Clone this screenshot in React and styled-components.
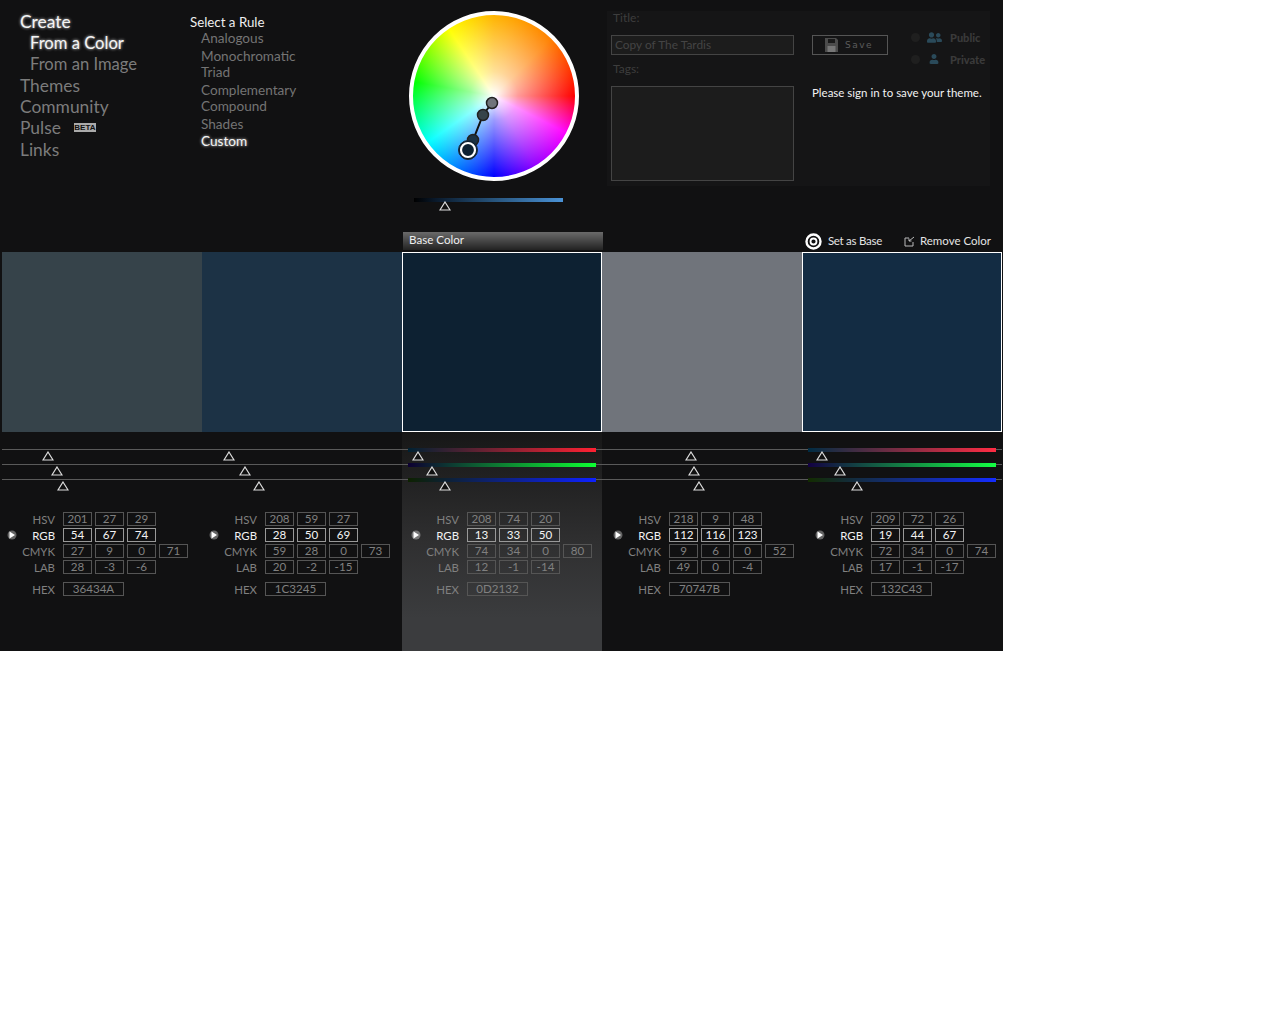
import React from 'react'
import styled, { createGlobalStyle } from 'styled-components'
import { FaUser, FaUserFriends } from 'react-icons/fa'

const GlobalStyle = createGlobalStyle`
  html, body {
    margin: 0;
    background: #fff;
  }
  body {
    font-family: "Lato", "Open Sans", sans-serif;
  }
`

const Page = styled.div`
  width: 1003px;
  height: 651px;
  background: #111112;
  overflow: hidden;
`

const Header = styled.div`
  display: flex;
  height: 232px;
`

const NavCol = styled.div`
  width: 170px;
  padding: 11.4px 0 0 20px;
`

const NavItem = styled.div`
  height: 21.2px;
  line-height: 21.2px;
  padding-left: ${p => (p.$sub ? '10px' : '0')};
  font-size: ${p => (p.$sub ? '16.6px' : '17.4px')};
  white-space: nowrap;
  color: ${p => (p.$active ? '#f4f4f4' : '#7c7c7c')};
  text-shadow: ${p => (p.$active ? '0 0 3px rgba(255,255,255,.9)' : 'none')};
  display: flex;
  align-items: center;
`

const Beta = styled.span`
  margin-left: 13px;
  width: 22px;
  height: 9px;
  background: #aaa;
  color: #111;
  font: bold 8px/9px "Liberation Sans", sans-serif;
  text-align: center;
`

const RuleCol = styled.div`
  width: 219px;
  padding-top: 15px;
`

const RuleTitle = styled.div`
  font-size: 13.3px;
  line-height: 15px;
  color: #eee;
`

const RuleList = styled.div`
  padding-left: 11px;
`

const RuleItem = styled.div`
  font-size: 13.6px;
  line-height: 16px;
  white-space: nowrap;
  color: ${p => (p.$active ? '#f4f4f4' : '#747474')};
  text-shadow: ${p => (p.$active ? '0 0 3px rgba(255,255,255,.85)' : 'none')};
  &:nth-child(even) {
    margin-top: 2px;
  }
  &:last-child {
    margin-top: 1px;
  }
`

const WheelCol = styled.div`
  width: 198px;
  padding-top: 11px;
`

const Wheel = styled.div`
  position: relative;
  box-sizing: border-box;
  width: 170px;
  height: 170px;
  border: 4px solid #fff;
  border-radius: 50%;
  background:
    radial-gradient(circle closest-side, #fff 0%, rgba(255, 255, 255, 0.6) 30%, rgba(255, 255, 255, 0) 100%),
    conic-gradient(#ffb400 0deg, #ff8000 45deg, #ff0000 90deg, #ff00ff 117deg, #9000ff 150deg, #0000ff 180deg, #00ffff 235deg, #00ff00 280deg, #ffff00 326deg, #ffb400 360deg);
`

const WheelOverlay = styled.svg`
  position: absolute;
  left: -4px;
  top: -4px;
`

const BrightTrack = styled.div`
  position: relative;
  margin: 17px 0 0 5px;
  width: 149px;
  height: 4px;
  background: linear-gradient(90deg, #000 0%, #0a1a2c 15%, #28567f 55%, #4a92d6 100%);
`

const Marker = styled.svg`
  position: absolute;
  top: ${p => p.$top}px;
  display: block;
`

const SavePanel = styled.div`
  display: flex;
  gap: 18px;
  box-sizing: border-box;
  width: 383px;
  height: 175px;
  margin-top: 11px;
  padding-left: 4px;
  background: #151516;
`

const FormCol = styled.div`
  width: 183px;
`

const FieldLabel = styled.div`
  height: 14px;
  padding-left: 2px;
  font-size: 12px;
  line-height: 14px;
  color: #3d3d3d;
`

const TitleInput = styled.div`
  box-sizing: border-box;
  height: 20px;
  margin: 10px 0 7px;
  padding-left: 3px;
  border: 1px solid #444;
  background: #1c1c1c;
  font-size: 11.9px;
  line-height: 18px;
  color: #444;
`

const TagsInput = styled.div`
  box-sizing: border-box;
  height: 95px;
  margin-top: 10px;
  border: 1px solid #444;
  background: #1c1c1c;
`

const SideCol = styled.div`
  padding-top: 15px;
`

const SaveRow = styled.div`
  display: flex;
  height: 46px;
`

const SaveButton = styled.div`
  display: flex;
  align-items: center;
  gap: 7px;
  box-sizing: border-box;
  width: 76px;
  height: 20px;
  margin-top: 9px;
  padding-left: 12px;
  border: 1px solid #555;
  font: 9px "DejaVu Sans", sans-serif;
  letter-spacing: 1.5px;
  color: #5c5c5c;
`

const Visibility = styled.div`
  margin-left: 23px;
`

const VisRow = styled.div`
  display: flex;
  align-items: center;
  height: 22px;
  font-size: 11px;
  font-weight: 900;
  color: #3a3a3a;
`

const Radio = styled.span`
  width: 9px;
  height: 9px;
  border-radius: 50%;
  background: #1f1f1f;
  margin-right: 6px;
`

const VisIcon = styled.span`
  display: flex;
  justify-content: center;
  width: 16px;
  margin-right: 8px;
  color: #2a4a5a;
`

const SignIn = styled.div`
  margin-top: 14px;
  font-size: 11.5px;
  line-height: 14px;
  white-space: nowrap;
  color: #f2f2f2;
`

const ActionBar = styled.div`
  display: flex;
  align-items: flex-start;
  height: 20px;
  padding: 0 12px 0 403px;
`

const BaseTab = styled.div`
  box-sizing: border-box;
  width: 200px;
  height: 18px;
  padding-left: 6px;
  background: linear-gradient(#6a6a6a, #222);
  font-size: 11.6px;
  line-height: 16px;
  color: #eee;
`

const Actions = styled.div`
  display: flex;
  align-items: center;
  height: 17px;
  margin-left: auto;
  font-size: 11.5px;
  color: #e4e4e4;
`

const ActionIcon = styled.svg`
  display: block;
  margin: 1px ${p => p.$gap}px 0 0;
`

const ActionText = styled.span`
  margin-right: ${p => p.$gap || 0}px;
  letter-spacing: ${p => (p.$tight ? '-0.27px' : '0')};
`

const Columns = styled.div`
  display: flex;
  padding-left: 2px;
`

const Column = styled.div`
  width: 200px;
`

const Swatch = styled.div`
  box-sizing: border-box;
  height: 180px;
  background: ${p => p.$color};
  border: ${p => (p.$selected ? '1px solid #fff' : 'none')};
`

const Lower = styled.div`
  height: 219px;
  padding-top: 17px;
  box-sizing: border-box;
  background: ${p => (p.$base ? 'linear-gradient(#171717, #2f2f30 50%, #3b3c3e 85%)' : 'none')};
`

const Sliders = styled.div`
  height: 47px;
`

const SliderRow = styled.div`
  position: relative;
  height: 15px;
`

const TrackLine = styled.div`
  height: 1px;
  background: #5a5a5a;
`

const TrackBar = styled.div`
  position: absolute;
  left: 6px;
  top: -1px;
  width: 188px;
  height: 4px;
  background: linear-gradient(90deg, ${p => p.$from}, ${p => p.$to});
`

const Readout = styled.div`
  padding: 16px 0 0 ${p => p.$inset}px;
`

const ValueRow = styled.div`
  display: flex;
  align-items: center;
  gap: 3px;
  height: 14px;
  margin-bottom: 2px;
  &:last-child {
    margin-top: 8px;
  }
`

const Bullet = styled.span`
  display: block;
  width: 10px;
  height: 14px;
  flex: none;
`

const Label = styled.span`
  width: 35px;
  margin-right: 5px;
  text-align: right;
  font-size: 11.4px;
  white-space: nowrap;
  direction: rtl;
  color: ${p => (p.$on ? '#f2f2f2' : '#808080')};
`

const ValueBox = styled.span`
  box-sizing: border-box;
  width: ${p => (p.$wide ? '61px' : '29px')};
  height: 14px;
  border: 1px solid ${p => (p.$on ? '#999' : '#555')};
  text-align: center;
  font-size: 11.6px;
  line-height: 12px;
  color: ${p => (p.$on ? '#f4f4f4' : '#808080')};
`

const Triangle = ({ left, top = 2 }) => (
  <Marker $top={top} width="12" height="10" viewBox="0 0 12 10" style={{ left }}>
    <path d="M6 1 L11 9 L1 9 Z" fill="#111" stroke="#ddd" strokeWidth="1.2" />
  </Marker>
)

const PlayDot = () => (
  <Bullet as="svg" viewBox="0 0 10 14">
    <circle cx="5" cy="7" r="4.5" fill="#fff" opacity=".35" />
    <path d="M2.5 3.5 L8 7 L2.5 10.5 Z" fill="#fff" />
  </Bullet>
)

const colors = [
  { hex: '36434A', hsv: [201, 27, 29], rgb: [54, 67, 74], cmyk: [27, 9, 0, 71], lab: [28, -3, -6] },
  { hex: '1C3245', hsv: [208, 59, 27], rgb: [28, 50, 69], cmyk: [59, 28, 0, 73], lab: [20, -2, -15] },
  { hex: '0D2132', hsv: [208, 74, 20], rgb: [13, 33, 50], cmyk: [74, 34, 0, 80], lab: [12, -1, -14], base: true },
  { hex: '70747B', hsv: [218, 9, 48], rgb: [112, 116, 123], cmyk: [9, 6, 0, 52], lab: [49, 0, -4] },
  { hex: '132C43', hsv: [209, 72, 26], rgb: [19, 44, 67], cmyk: [72, 34, 0, 74], lab: [17, -1, -17], selected: true },
]

const channelStops = (rgb, channel) => {
  const from = rgb.map((v, i) => (i === channel ? 0 : v))
  const to = rgb.map((v, i) => (i === channel ? 255 : v))
  return [`rgb(${from.join(',')})`, `rgb(${to.join(',')})`]
}

const ColorColumn = ({ color, index }) => {
  const showBars = color.base || color.selected
  const groups = [
    ['HSV', color.hsv],
    ['RGB', color.rgb],
    ['CMYK', color.cmyk],
    ['LAB', color.lab],
  ]

  return (
    <Column>
      <Swatch $color={`#${color.hex}`} $selected={showBars} />
      <Lower $base={color.base}>
        <Sliders>
          {color.rgb.map((value, channel) => {
            const [from, to] = channelStops(color.rgb, channel)
            return (
              <SliderRow key={channel}>
                <TrackLine />
                {showBars && <TrackBar $from={from} $to={to} />}
                <Triangle left={Math.round(6 + (value / 255) * 188) - 6} />
              </SliderRow>
            )
          })}
        </Sliders>
        <Readout $inset={5 + index * 2}>
          {groups.map(([name, values]) => (
            <ValueRow key={name}>
              {name === 'RGB' ? <PlayDot /> : <Bullet />}
              <Label $on={name === 'RGB'}>{name}</Label>
              {values.map((v, i) => (
                <ValueBox key={i} $on={name === 'RGB'}>{v}</ValueBox>
              ))}
            </ValueRow>
          ))}
          <ValueRow>
            <Bullet />
            <Label>HEX</Label>
            <ValueBox $wide>{color.hex}</ValueBox>
          </ValueRow>
        </Readout>
      </Lower>
    </Column>
  )
}

export default function App() {
  return (
    <Page>
      <GlobalStyle />
      <Header>
        <NavCol>
          <NavItem $active>Create</NavItem>
          <NavItem $active $sub>From a Color</NavItem>
          <NavItem $sub>From an Image</NavItem>
          <NavItem>Themes</NavItem>
          <NavItem>Community</NavItem>
          <NavItem>Pulse<Beta>BETA</Beta></NavItem>
          <NavItem>Links</NavItem>
        </NavCol>
        <RuleCol>
          <RuleTitle>Select a Rule</RuleTitle>
          <RuleList>
            <RuleItem>Analogous</RuleItem>
            <RuleItem>Monochromatic</RuleItem>
            <RuleItem>Triad</RuleItem>
            <RuleItem>Complementary</RuleItem>
            <RuleItem>Compound</RuleItem>
            <RuleItem>Shades</RuleItem>
            <RuleItem $active>Custom</RuleItem>
          </RuleList>
        </RuleCol>
        <WheelCol>
          <Wheel>
            <WheelOverlay width="170" height="170" viewBox="0 0 170 170">
              <path d="M83 92 L74 104 L64 129 L59 139" stroke="#111" strokeWidth="2" fill="none" />
              <circle cx="83" cy="92" r="5.5" fill="#70747B" stroke="#222" strokeWidth="1.5" />
              <circle cx="74" cy="104" r="5.5" fill="#36434A" stroke="#222" strokeWidth="1.5" />
              <circle cx="64" cy="129" r="5.5" fill="#1C3245" stroke="#222" strokeWidth="1.5" />
              <circle cx="59" cy="139" r="9.5" fill="#0D2132" stroke="#1a2a3a" strokeWidth="1" />
              <circle cx="59" cy="139" r="7" fill="#0D2132" stroke="#fff" strokeWidth="2.2" />
            </WheelOverlay>
          </Wheel>
          <BrightTrack>
            <Triangle left={25} top={3} />
          </BrightTrack>
        </WheelCol>
        <SavePanel>
          <FormCol>
            <FieldLabel>Title:</FieldLabel>
            <TitleInput>Copy of The Tardis</TitleInput>
            <FieldLabel>Tags:</FieldLabel>
            <TagsInput />
          </FormCol>
          <SideCol>
            <SaveRow>
              <SaveButton>
                <svg width="13" height="14" viewBox="0 0 13 14">
                  <path d="M0 0 H11 L13 2 V14 H0 Z" fill="#4c4c4c" />
                  <rect x="3" y="1" width="7" height="4" fill="#1a1a1a" />
                  <rect x="2.5" y="8" width="8" height="6" fill="#777" />
                </svg>
                Save
              </SaveButton>
              <Visibility>
                <VisRow>
                  <Radio />
                  <VisIcon><FaUserFriends size={15} /></VisIcon>
                  Public
                </VisRow>
                <VisRow>
                  <Radio />
                  <VisIcon><FaUser size={10} /></VisIcon>
                  Private
                </VisRow>
              </Visibility>
            </SaveRow>
            <SignIn>Please sign in to save your theme.</SignIn>
          </SideCol>
        </SavePanel>
      </Header>
      <ActionBar>
        <BaseTab>Base Color</BaseTab>
        <Actions>
          <ActionIcon $gap={6} width="17" height="17" viewBox="0 0 17 17">
            <circle cx="8.5" cy="8.5" r="7" fill="none" stroke="#fff" strokeWidth="2.4" />
            <circle cx="8.5" cy="8.5" r="3" fill="none" stroke="#fff" strokeWidth="1.8" />
          </ActionIcon>
          <ActionText $gap={22} $tight>Set as Base</ActionText>
          <ActionIcon $gap={5} width="11" height="11" viewBox="0 0 11 11">
            <path d="M1 2 H5 M1 2 V10 H9 V6" stroke="#bbb" fill="none" />
            <path d="M10 1 L5 5 M5 2.5 V5 H7.5" stroke="#bbb" fill="none" />
          </ActionIcon>
          <ActionText>Remove Color</ActionText>
        </Actions>
      </ActionBar>
      <Columns>
        {colors.map((color, index) => (
          <ColorColumn key={color.hex} color={color} index={index} />
        ))}
      </Columns>
    </Page>
  )
}
